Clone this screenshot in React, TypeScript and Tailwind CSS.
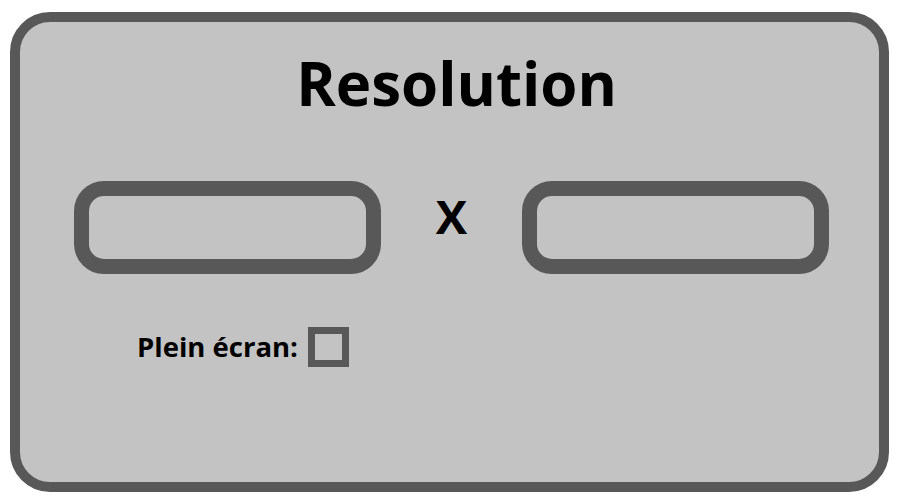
export default function App() {
  return (
    <div className="w-[900px] h-[500px] bg-white pt-[12px] pl-[10px]" style={{ fontFamily: '"Open Sans", "Noto Sans", sans-serif' }}>
      <div className="w-[879px] h-[480px] border-[10px] border-[#585858] rounded-[40px] bg-[#c3c3c3] flex flex-col">
        <div className="h-[108px] flex items-start justify-center pl-[14px]">
          <h1 className="mt-[26px] text-[60px] leading-[70px] font-bold text-black">Resolution</h1>
        </div>
        <div className="mt-[51px] flex items-center pl-[54px]">
          <div className="w-[307px] h-[93px] border-[15px] border-[#585858] rounded-[30px]" />
          <div className="w-[141px] text-center text-[47px] font-bold leading-none text-black mb-[22px]">X</div>
          <div className="w-[307px] h-[93px] border-[15px] border-[#585858] rounded-[30px]" />
        </div>
        <div className="mt-[53px] flex items-center pl-[117px]">
          <span className="text-[27.5px] font-bold text-black leading-none">Plein écran:</span>
          <div className="ml-[10px] w-[41px] h-[40px] border-[7px] border-[#585858]" />
        </div>
      </div>
    </div>
  );
}
